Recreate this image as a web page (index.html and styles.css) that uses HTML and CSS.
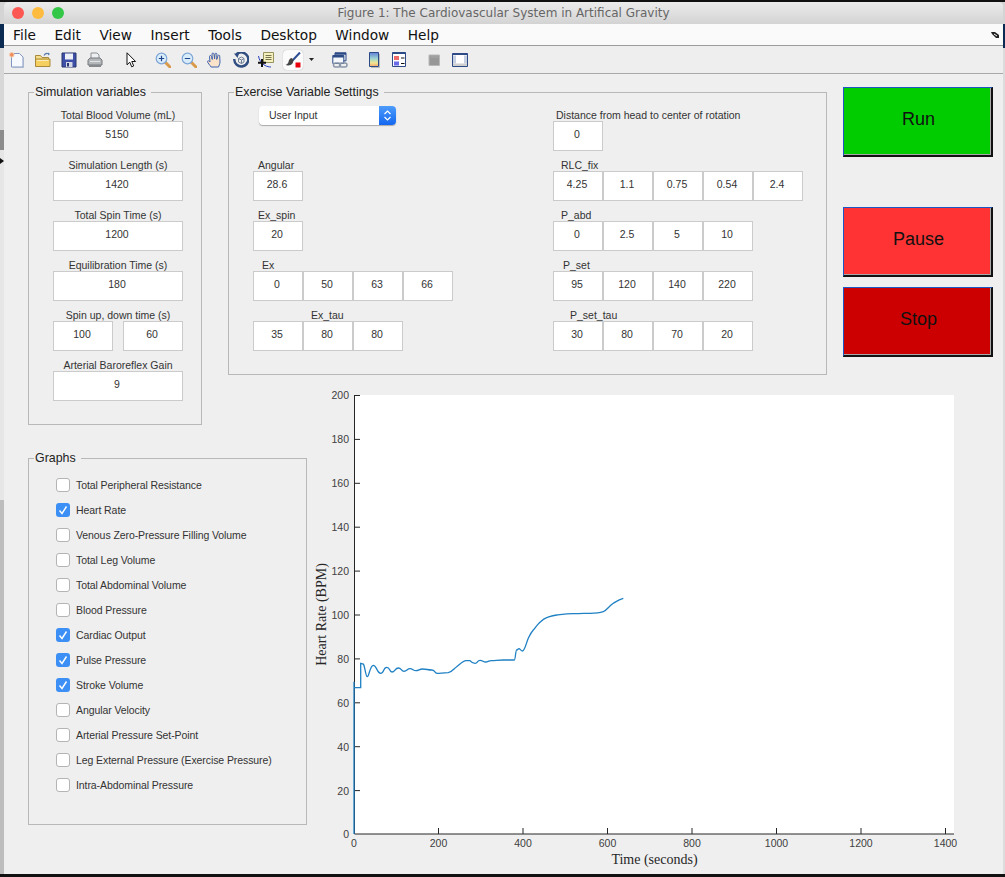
FILE: index.html
```html
<!DOCTYPE html>
<html lang="en">
<head>
    <meta charset="UTF-8">
    <title>Figure 1: The Cardiovascular System in Artifical Gravity</title>
    <link rel="stylesheet" href="styles.css">
</head>
<body>
    <span class="edge-mark"></span>
    <div class="window">
        <div class="titlebar">
            <span class="light red"></span>
            <span class="light yellow"></span>
            <span class="light green"></span>
            <span class="title">Figure 1: The Cardiovascular System in Artifical Gravity</span>
        </div>

        <nav class="menubar">
            <span>File</span>
            <span>Edit</span>
            <span>View</span>
            <span>Insert</span>
            <span>Tools</span>
            <span>Desktop</span>
            <span>Window</span>
            <span>Help</span>
            <svg class="dock" width="9" height="8" viewBox="0 0 9 8"><path d="M0 1h4l4 3v3H5L1 3z" fill="#222"/><path d="M3 3l3 2" stroke="#fff"/></svg>
        </nav>

        <div class="toolbar">
            <!-- new -->
            <svg class="icon" viewBox="0 0 16 16"><path d="M2.5 1.5h8l3.5 3.5v10h-11.500z" fill="#f6f9fd" stroke="#8296bf"/><path d="M4 15.500h10.500v-10" fill="none" stroke="#a9b6cf"/><circle cx="2.800" cy="2.800" r="2.300" fill="#ee8d5c" stroke="#f7c9a8"/></svg>
            <!-- open -->
            <svg class="icon" viewBox="0 0 16 16"><path d="M9 3.500c1-2 3-2.500 5-1.500" fill="none" stroke="#5d7fae" stroke-width="1.200"/><path d="M13 .5l2 1.500-2 1.500z" fill="#5d7fae"/><path d="M.5 6V3.500h5l1.500 2h6.500v2H.5z" fill="#f4dd8b" stroke="#a98a3a"/><path d="M.5 14.500V7h14.500v7.500z" fill="#f5cf5f" stroke="#a98a3a"/><path d="M2 8.500h11.500" stroke="#fbeebb"/></svg>
            <!-- save -->
            <svg class="icon" viewBox="0 0 16 16"><path d="M1 1h14v14H1z" fill="#3d4fa6" stroke="#2b3870"/><path d="M4 1.500h8v6H4z" fill="#eef0f8"/><path d="M5 10h6.500v5H5z" fill="#d5d8e6"/><path d="M6 11h2v3.500H6z" fill="#2b3870"/></svg>
            <!-- print -->
            <svg class="icon print" viewBox="0 0 16 16"><path d="M4 1h6l2 2v5H4z" fill="#eef0f2" stroke="#8b8f94"/><path d="M1 8l2-2h10l2 2v5H1z" fill="#b4b7ba" stroke="#75797d"/><path d="M2 13h12v2H2z" fill="#85898d"/><path d="M3 9.500h10" stroke="#e2e4e6"/></svg>
            <!-- arrow -->
            <svg class="icon arrow" viewBox="0 0 16 16"><path d="M4 .8v12l2.800-2.600 1.900 4.600 2-.9-1.900-4.400h3.800z" fill="#fff" stroke="#111"/></svg>
            <!-- zoom in -->
            <svg class="icon gap-group" viewBox="0 0 16 16"><path d="M10 10l5 5" stroke="#d99a4b" stroke-width="3" stroke-linecap="round"/><circle cx="6.500" cy="6.500" r="5.300" fill="#d9ecfa" stroke="#7fa6d6" stroke-width="1.200"/><path d="M3.800 6.500h5.400M6.500 3.800v5.400" stroke="#22468e" stroke-width="1.200"/></svg>
            <!-- zoom out -->
            <svg class="icon" viewBox="0 0 16 16"><path d="M10 10l5 5" stroke="#d99a4b" stroke-width="3" stroke-linecap="round"/><circle cx="6.500" cy="6.500" r="5.300" fill="#d9ecfa" stroke="#7fa6d6" stroke-width="1.200"/><path d="M3.800 6.500h5.400" stroke="#22468e" stroke-width="1.200"/></svg>
            <!-- pan -->
            <svg class="icon" viewBox="0 0 16 16"><path d="M4 15c-1-2-3.500-4-3.500-5.500 0-1 1.500-1 2.500.5L2.500 4.500c0-1.300 1.700-1.300 2 0l.8 3-.3-5.500c0-1.300 1.800-1.300 2 0l.6 5 .4-5c.2-1.200 1.800-1.100 1.900.2l-.2 5.300 1.300-3.800c.4-1.100 1.900-.7 1.700.5L13 10c-.3 2.500-1 3.500-1.500 5z" fill="#fbe3cb" stroke="#3f63ad"/></svg>
            <!-- rotate -->
            <svg class="icon" viewBox="0 0 16 16"><path d="M3.500 2.300A7 7 0 1 1 1.300 7" fill="none" stroke="#2f4d80" stroke-width="2.400"/><path d="M1 1.500h5l-1.500 4.500z" fill="#2f4d80"/><path d="M5.500 6.500l3-1.500 2.500 1.500v3.500l-2.500 1.500-3-1.500zM5.500 6.500l3 1.500 2.500-1.500M8.500 8v3.500" fill="none" stroke="#6f7f98"/></svg>
            <!-- data tip -->
            <svg class="icon tip" viewBox="0 0 16 16"><path d="M5.500.5h10v10h-10z" fill="#f5f0bf" stroke="#98935d"/><path d="M7.500 3.500h6M7.500 5.500h6M7.500 7.500h6" stroke="#77734a"/><path d="M.5 4c.5 4 3 7.500 6.500 9.500 2 1 4 1.500 6 1.500" fill="none" stroke="#2b3fc0"/><path d="M0 10.800h8M4 7v8" stroke="#111" stroke-width="2"/></svg>
            <!-- brush -->
            <span class="brush-btn">
                <svg class="icon" viewBox="0 0 16 16"><path d="M15 .5L7.500 8.500" stroke="#2c4d92" stroke-width="2"/><path d="M8.500 7.500l-2-1.500c-2 .5-2.500 2-3 4-.3 1.300-1.500 2.500-3 3 2.500 1 6.500.5 7.500-2.500z" fill="#444"/><path d="M10.500 10.500h5v5h-5z" fill="#e8000d"/></svg>
            </span>
            <svg class="drop" width="5" height="3" viewBox="0 0 5 3"><path d="M0 0h5L2.500 3z" fill="#222"/></svg>
            <!-- link -->
            <svg class="icon link" viewBox="0 0 16 16"><path d="M3 .8h11v8H3z" fill="#e9eef7" stroke="#2c4a86"/><path d="M3 .8h11v2H3z" fill="#2c4a86"/><path d="M.8 3.500h11v8H.8z" fill="#f4f7fb" stroke="#2c4a86"/><path d="M.8 3.500h11v2H.8z" fill="#2c4a86"/><rect x="1.500" y="11" width="7" height="4" rx="2" fill="none" stroke="#8a97a8" stroke-width="1.500"/><rect x="7.500" y="11" width="7.500" height="4" rx="2" fill="none" stroke="#8a97a8" stroke-width="1.500"/></svg>
            <!-- colorbar -->
            <svg class="icon bar" viewBox="0 0 16 16"><defs><linearGradient id="cbar" x1="0" y1="0" x2="0" y2="1"><stop offset="0" stop-color="#5f7fd8"/><stop offset=".45" stop-color="#9fd8d0"/><stop offset=".75" stop-color="#f2e58e"/><stop offset="1" stop-color="#f0a070"/></linearGradient></defs><path d="M3.500.5h9v14h-9z" fill="url(#cbar)" stroke="#2c4a86"/><path d="M5 15.500h8.500V2" fill="none" stroke="#bbb"/></svg>
            <!-- legend -->
            <svg class="icon legend" viewBox="0 0 16 16"><path d="M1.500.5h13v14h-13z" fill="#fff" stroke="#2c4a86"/><path d="M1.500.5h13v1.500h-13z" fill="#2c4a86"/><path d="M3 4h5v4H3z" fill="#ee6a6a"/><path d="M3 9.500h5v4H3z" fill="#6a6ae8"/><path d="M10 6h3.500M10 11.500h3.500" stroke="#111"/></svg>
            <!-- hide tools -->
            <svg class="icon hide" viewBox="0 0 16 16"><path d="M3 3h10.500v10.500H3z" fill="#979797" stroke="#b8b8b8"/><path d="M4.500 5h8" stroke="#a8a8a8"/></svg>
            <!-- plot tools -->
            <svg class="icon" viewBox="0 0 16 16"><path d="M.5 1.500h15v13H.5z" fill="#fff" stroke="#2c4a86"/><path d="M.5 1.500h15v1.500H.5z" fill="#2c4a86"/><path d="M1 3.500h3v8H1zM12 3.500h3v8h-3z" fill="#c5d0e2"/><path d="M1 11.500h14V14H1z" fill="#cfcfcf"/></svg>
        </div>

        <main class="canvas">
            <fieldset class="panel sim">
                <legend>Simulation variables</legend>
                <div class="panel-body">
                    <div class="field">
                        <label>Total Blood Volume (mL)</label>
                        <input class="wide" type="text" value="5150">
                    </div>
                    <div class="field">
                        <label>Simulation Length (s)</label>
                        <input class="wide" type="text" value="1420">
                    </div>
                    <div class="field">
                        <label>Total Spin Time (s)</label>
                        <input class="wide" type="text" value="1200">
                    </div>
                    <div class="field">
                        <label>Equilibration Time (s)</label>
                        <input class="wide" type="text" value="180">
                    </div>
                    <div class="field">
                        <label>Spin up, down time (s)</label>
                        <div class="split">
                            <input class="half" type="text" value="100">
                            <input class="half" type="text" value="60">
                        </div>
                    </div>
                    <div class="field">
                        <label>Arterial Baroreflex Gain</label>
                        <input class="wide" type="text" value="9">
                    </div>
                </div>
            </fieldset>

            <fieldset class="panel exercise">
                <legend>Exercise Variable Settings</legend>
                <div class="settings">
                    <div class="dropdown">
                        <span class="dropdown-text">User Input</span>
                        <span class="stepper">
                            <svg width="9" height="13" viewBox="0 0 9 13"><path d="M1.500 5L4.500 2l3 3M1.500 8l3 3 3-3" fill="none" stroke="#fff" stroke-width="1.200"/></svg>
                        </span>
                    </div>
                    <div class="cell">
                        <label class="tag tag-distance">Distance from head to center of rotation</label>
                        <div class="inputs"><input type="text" value="0"></div>
                    </div>

                    <div class="cell">
                        <label class="tag tag-angular">Angular</label>
                        <div class="inputs"><input type="text" value="28.6"></div>
                    </div>
                    <div class="cell">
                        <label class="tag tag-rlc">RLC_fix</label>
                        <div class="inputs">
                            <input type="text" value="4.25">
                            <input type="text" value="1.1">
                            <input type="text" value="0.75">
                            <input type="text" value="0.54">
                            <input type="text" value="2.4">
                        </div>
                    </div>

                    <div class="cell">
                        <label class="tag tag-angular">Ex_spin</label>
                        <div class="inputs"><input type="text" value="20"></div>
                    </div>
                    <div class="cell">
                        <label class="tag tag-rlc">P_abd</label>
                        <div class="inputs">
                            <input type="text" value="0">
                            <input type="text" value="2.5">
                            <input type="text" value="5">
                            <input type="text" value="10">
                        </div>
                    </div>

                    <div class="cell">
                        <label class="tag tag-ex">Ex</label>
                        <div class="inputs">
                            <input type="text" value="0">
                            <input type="text" value="50">
                            <input type="text" value="63">
                            <input type="text" value="66">
                        </div>
                    </div>
                    <div class="cell">
                        <label class="tag tag-pset">P_set</label>
                        <div class="inputs">
                            <input type="text" value="95">
                            <input type="text" value="120">
                            <input type="text" value="140">
                            <input type="text" value="220">
                        </div>
                    </div>

                    <div class="cell">
                        <label class="tag tag-extau">Ex_tau</label>
                        <div class="inputs">
                            <input type="text" value="35">
                            <input type="text" value="80">
                            <input type="text" value="80">
                        </div>
                    </div>
                    <div class="cell">
                        <label class="tag tag-psettau">P_set_tau</label>
                        <div class="inputs">
                            <input type="text" value="30">
                            <input type="text" value="80">
                            <input type="text" value="70">
                            <input type="text" value="20">
                        </div>
                    </div>
                </div>
            </fieldset>

            <div class="actions">
                <button class="btn run">Run</button>
                <button class="btn pause">Pause</button>
                <button class="btn stop">Stop</button>
            </div>

            <fieldset class="panel graphs">
                <legend>Graphs</legend>
                <div class="check-list">
                    <div class="check-row"><span class="box"></span>Total Peripheral Resistance</div>
                    <div class="check-row"><span class="box on"><svg width="14" height="14" viewBox="0 0 14 14"><path d="M3.500 7.500l2.500 3 4.500-7" fill="none" stroke="#fff" stroke-width="1.400"/></svg></span>Heart Rate</div>
                    <div class="check-row"><span class="box"></span>Venous Zero-Pressure Filling Volume</div>
                    <div class="check-row"><span class="box"></span>Total Leg Volume</div>
                    <div class="check-row"><span class="box"></span>Total Abdominal Volume</div>
                    <div class="check-row"><span class="box"></span>Blood Pressure</div>
                    <div class="check-row"><span class="box on"><svg width="14" height="14" viewBox="0 0 14 14"><path d="M3.500 7.500l2.500 3 4.500-7" fill="none" stroke="#fff" stroke-width="1.400"/></svg></span>Cardiac Output</div>
                    <div class="check-row"><span class="box on"><svg width="14" height="14" viewBox="0 0 14 14"><path d="M3.500 7.500l2.500 3 4.500-7" fill="none" stroke="#fff" stroke-width="1.400"/></svg></span>Pulse Pressure</div>
                    <div class="check-row"><span class="box on"><svg width="14" height="14" viewBox="0 0 14 14"><path d="M3.500 7.500l2.500 3 4.500-7" fill="none" stroke="#fff" stroke-width="1.400"/></svg></span>Stroke Volume</div>
                    <div class="check-row"><span class="box"></span>Angular Velocity</div>
                    <div class="check-row"><span class="box"></span>Arterial Pressure Set-Point</div>
                    <div class="check-row"><span class="box"></span>Leg External Pressure (Exercise Pressure)</div>
                    <div class="check-row"><span class="box"></span>Intra-Abdominal Pressure</div>
                </div>
            </fieldset>

            <!-- viewBox uses window coordinates so the axes read straight off the figure -->
            <svg class="plot" viewBox="308 375 685 499">
                <rect x="354" y="395" width="600" height="439" fill="#fff"/>
                <path class="axis" d="M354.500 395V834H954"/>
                <path class="axis" d="M354 395.500h6M354 439.400h6M354 483.300h6M354 527.200h6M354 571.100h6M354 615h6M354 658.900h6M354 702.800h6M354 746.700h6M354 790.600h6M438.500 834v-6M523 834v-6M607.500 834v-6M692 834v-6M776.500 834v-6M861 834v-6M945.500 834v-6"/>
                <path class="trace" d="M354 834V681.700M354 687.700H360.700V663.300L363.300 664C365 666 365.500 676.700 367.300 676.700S370 665.300 373.300 665.300S377 673.300 380.700 673.300S383 667.300 386.700 667.300S389 672 392 672S395 668 398.300 668S401 671.300 404 671.300S407 668.700 410 668.700S413 670.700 416 670.700S419 669 422.700 669S428 670 431.700 670S434 673.300 437.300 673.300S443 672.700 448.300 672.700C452 672 454 668.500 456.700 666.700S463 660.700 466 660.700S470 660.700 470 660.700S472 663.300 475 663.300S477 660.300 480 660.300S483 662 485.700 662S488 660.700 491.700 660.700S498 660 503.300 660H514.300C515.500 660 515.500 650 516.700 650S518 648.700 519 648.700S521 651 522.700 651C525 650 526.500 642 528.300 638.300S531 632.500 533.300 630S536.500 625.500 539 623.300S543 619 546.700 617.700S552 615.500 556.700 615S565 613.700 573.300 613.700S585 613.300 590 613.300S600 612.800 603.300 611.700S609 606 613.300 603.300S619 599.500 623.300 598.300"/>
                <g class="ticks-y">
                    <text x="349" y="399">200</text>
                    <text x="349" y="443">180</text>
                    <text x="349" y="487">160</text>
                    <text x="349" y="531">140</text>
                    <text x="349" y="575">120</text>
                    <text x="349" y="619">100</text>
                    <text x="349" y="663">80</text>
                    <text x="349" y="707">60</text>
                    <text x="349" y="751">40</text>
                    <text x="349" y="795">20</text>
                    <text x="349" y="838">0</text>
                </g>
                <g class="ticks-x">
                    <text x="354" y="847">0</text>
                    <text x="438.500" y="847">200</text>
                    <text x="523" y="847">400</text>
                    <text x="607.500" y="847">600</text>
                    <text x="692" y="847">800</text>
                    <text x="776.500" y="847">1000</text>
                    <text x="861" y="847">1200</text>
                    <text x="945.500" y="847">1400</text>
                </g>
                <text class="axis-label" x="654.500" y="864">Time (seconds)</text>
                <text class="axis-label" transform="translate(326 614.500) rotate(-90)">Heart Rate (BPM)</text>
            </svg>
        </main>
    </div>
</body>
</html>
```

FILE: styles.css
```css
*{
    box-sizing: border-box;
}
body{
    position: relative;
    margin: 0;
    height: 877px;
    padding: 2px 2px 3px 4px;
    overflow: hidden;
    font-family: "Liberation Sans", Arial, sans-serif;
    background:
        linear-gradient(#dcdcdc, #dcdcdc) right 48px / 2px 826px no-repeat,
        linear-gradient(to bottom, #111 0 2px, #d4d4d4 2px 24px, #0b2b52 24px 48px, #d8d8d8 48px 130px, #8c8c8c 130px 150px, #e6e6e6 150px 500px, #bdbdbd 500px 874px, #111 874px);
}
/* bit of the desktop showing past the window edge */
.edge-mark{
    position: absolute;
    left: 0;
    top: 158px;
    border-left: 4px solid #111;
    border-top: 3px solid transparent;
    border-bottom: 3px solid transparent;
}
.window{
    height: 100%;
    display: flex;
    flex-direction: column;
    background: #efefef;
    border-radius: 5px 5px 0 0;
    overflow: hidden;
}

/* title bar */
.titlebar{
    position: relative;
    height: 22px;
    flex: none;
    display: flex;
    align-items: center;
    gap: 8px;
    padding-left: 8px;
    background: linear-gradient(#ececec, #d3d3d3);
}
.light{
    width: 12px;
    height: 12px;
    border-radius: 50%;
}
.red{ background: #fc5753; }
.yellow{ background: #fdbc40; }
.green{ background: #33c748; }
.title{
    position: absolute;
    left: 0;
    right: 0;
    text-align: center;
    font-family: "DejaVu Sans", sans-serif;
    font-size: 12px;
    color: #666;
}

/* menu */
.menubar{
    height: 22px;
    flex: none;
    display: flex;
    align-items: center;
    gap: 18.5px;
    padding-left: 9px;
    background: #fafafa;
    border-bottom: 1px solid #9c9c9c;
    font-family: "DejaVu Sans", sans-serif;
    font-size: 13.7px;
    color: #111;
}
.dock{
    margin-left: auto;
    margin-right: 3px;
}

/* toolbar */
.toolbar{
    height: 28px;
    flex: none;
    display: flex;
    align-items: center;
    gap: 10px;
    padding-left: 5px;
    background: #eeeeee;
    border-bottom: 1px solid #a8a8a8;
}
.icon{
    width: 16px;
    height: 16px;
    flex: none;
    display: block;
}
.arrow{ margin-left: 10px; }
.gap-group{ margin-left: 6px; }
.tip{ margin-left: -1px; }
.brush-btn{
    width: 20px;
    height: 20px;
    margin-left: -1px;
    display: flex;
    align-items: center;
    justify-content: center;
    background: #fbfbfb;
    border-radius: 4px;
    box-shadow: 0 0 1px #999;
}
.drop{ margin-left: -4px; }
.link{ margin-left: 8px; }
.bar{ margin-left: 8px; }
.legend{ margin-left: -1px; }
.hide{ margin-left: 9px; }

/* figure area */
.canvas{
    flex: 1;
    display: grid;
    grid-template-columns: 174px 26px 80px 519px 16px 150px;
    grid-template-rows: 290px 50px 26px 374px;
    padding: 11px 0 0 24px;
}
.panel{
    margin: 0;
    padding: 0;
    min-width: 0;
    border: 1px solid #b8b8b8;
}
legend{
    margin-left: 5px;
    padding: 0 5px 0 1px;
    font-size: 12.4px;
    line-height: 14px;
    color: #222;
}
label, .dropdown{
    font-size: 10.5px;
    color: #333;
}
input{
    display: block;
    width: 50px;
    height: 30px;
    margin: 0;
    padding: 0 2px 4px 0;
    flex: none;
    border: 1px solid #cbcbcb;
    border-radius: 0;
    outline: none;
    background: #fff;
    text-align: center;
    font-family: inherit;
    font-size: 10.5px;
    color: #333;
}

/* simulation variables */
.sim{
    grid-column: 1;
    grid-row: 1 / 3;
}
.panel-body{
    padding: 6px 0 0 24px;
}
.field{
    width: 130px;
    height: 46px;
    margin-bottom: 4px;
    display: flex;
    flex-direction: column;
    text-align: center;
}
.field label{
    height: 16px;
    line-height: 20px;
    white-space: nowrap;
}
.wide{ width: 130px; }
.half{ width: 60px; }
.split{
    display: flex;
    justify-content: space-between;
}

/* exercise settings */
.exercise{
    grid-column: 3 / 5;
    grid-row: 1;
}
.settings{
    display: grid;
    grid-template-columns: 300px 1fr;
    grid-auto-rows: 46px;
    row-gap: 4px;
    padding: 6px 0 0 24px;
}
.cell{
    display: flex;
    flex-direction: column;
}
.tag{
    height: 16px;
    line-height: 20px;
    white-space: nowrap;
}
.tag-distance{ padding-left: 3px; }
.tag-angular{ padding-left: 5px; }
.tag-rlc{ padding-left: 8px; }
.tag-ex{ padding-left: 9px; }
.tag-extau{ padding-left: 58px; }
.tag-pset{ padding-left: 10px; }
.tag-psettau{ padding-left: 17px; }
.inputs{
    display: flex;
}
.dropdown{
    width: 137px;
    height: 19px;
    margin: 1px 0 0 6px;
    display: flex;
    align-items: center;
    justify-content: space-between;
    padding-left: 10px;
    background: #fff;
    border-radius: 4px;
    box-shadow: 0 1px 1px #a9a9a9;
}
.dropdown-text{
    padding-bottom: 2px;
}
.stepper{
    width: 17px;
    height: 19px;
    display: flex;
    align-items: center;
    justify-content: center;
    background: linear-gradient(#4d9cfb, #1467f0);
    border-radius: 0 4px 4px 0;
}

/* run buttons */
.actions{
    grid-column: 6;
    grid-row: 1;
    display: flex;
    flex-direction: column;
    padding-top: 2px;
}
.btn{
    width: 150px;
    height: 70px;
    flex: none;
    padding: 0 0 4px 2px;
    border-style: solid;
    border-width: 1px 2px 2px 1px;
    border-color: #1c57c4 #111 #111 #1c57c4;
    box-shadow: inset -1px -1px 0 #a8a8a8;
    border-radius: 0;
    font-family: inherit;
    font-size: 18px;
    color: #111;
}
.run{ background: #00cc00; }
.pause{ margin-top: 50px; background: #ff3333; }
.stop{ margin-top: 10px; background: #cc0000; }

/* graph checkboxes */
.graphs{
    grid-column: 1 / 4;
    grid-row: 4;
    margin-right: 1px;
}
.check-list{
    padding: 8px 0 0 27px;
}
.check-row{
    height: 25px;
    display: flex;
    align-items: center;
    gap: 6px;
    padding-bottom: 1px;
    white-space: nowrap;
    font-size: 10.5px;
    letter-spacing: -.08px;
    color: #333;
}
.box{
    width: 14px;
    height: 14px;
    flex: none;
    display: block;
    background: #fff;
    border: 1px solid #b4b4b4;
    border-radius: 3px;
}
.box.on{
    background: #3c8ff5;
    border: 0;
}
.box svg{ display: block; }

/* plot */
.plot{
    grid-column: 4 / 7;
    grid-row: 2 / 5;
    width: 685px;
    height: 499px;
}
.trace{
    fill: none;
    stroke: #1f80c4;
    stroke-width: 1.3;
}
.axis{
    fill: none;
    stroke: #262626;
    stroke-width: 1;
}
.ticks-y text, .ticks-x text{
    font-size: 10.5px;
    fill: #404040;
}
.ticks-y text{ text-anchor: end; }
.ticks-x text{ text-anchor: middle; }
.axis-label{
    font-family: "Liberation Serif", "Times New Roman", serif;
    font-size: 14px;
    fill: #262626;
    text-anchor: middle;
}
```
